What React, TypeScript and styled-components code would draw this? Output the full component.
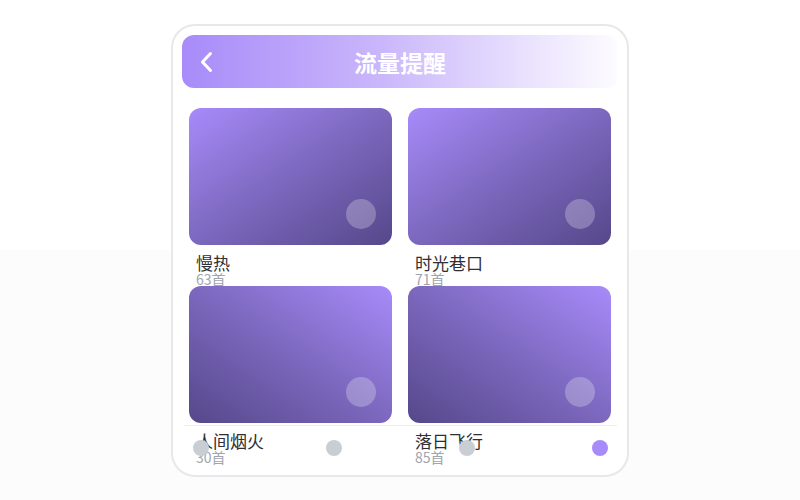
import * as React from 'react'
import styled, { createGlobalStyle } from 'styled-components'

const GlobalStyle = createGlobalStyle`
  html, body {
    margin: 0;
    padding: 0;
  }
  body {
    min-height: 500px;
    background: linear-gradient(#ffffff 0, #ffffff 250px, #fcfcfd 250px);
    font-family: "Noto Sans CJK SC", "Noto Sans", sans-serif;
  }
`

interface Playlist {
  name: string
  count: number
}

const playlists: Playlist[] = [
  { name: '慢热', count: 63 },
  { name: '时光巷口', count: 71 },
  { name: '人间烟火', count: 30 },
  { name: '落日飞行', count: 85 },
]

const tabs = ['home', 'discover', 'library', 'mine']
const ACTIVE_TAB = 3

export default function App(): JSX.Element {
  return (
    <>
      <GlobalStyle />
      <Page>
        <Phone>
          <Header>
            <BackButton aria-label="back">
              <svg width="16" height="24" viewBox="0 0 16 24">
                <path
                  d="M12.5 3.5 L4.5 12 L12.5 20.5"
                  fill="none"
                  stroke="#fff"
                  strokeWidth="3"
                  strokeLinecap="round"
                  strokeLinejoin="round"
                />
              </svg>
            </BackButton>
            <Title>流量提醒</Title>
            <span />
          </Header>
          <Grid>
            {playlists.map((item, i) => (
              <Cell key={item.name}>
                <Cover $flip={i >= 2}>
                  <PlayDot />
                </Cover>
                <Info>
                  <Name>{item.name}</Name>
                  <Count>{item.count}首</Count>
                </Info>
              </Cell>
            ))}
          </Grid>
          <TabBar>
            {tabs.map((t, i) => (
              <TabDot key={t} $active={i === ACTIVE_TAB} />
            ))}
          </TabBar>
        </Phone>
      </Page>
    </>
  )
}

const Page = styled.div`
  display: flex;
  justify-content: center;
  padding-top: 24px;
`

const Phone = styled.div`
  position: relative;
  box-sizing: border-box;
  width: 458px;
  height: 453px;
  padding: 9px;
  border: 2px solid #e7e7ec;
  border-radius: 24px;
  background: #ffffff;
  overflow: hidden;
`

const Header = styled.div`
  display: grid;
  grid-template-columns: 40px 1fr 40px;
  align-items: center;
  height: 53px;
  padding: 0 16px;
  border-radius: 12px;
  background: linear-gradient(90deg, #a88bf9 0%, #c9b6fb 45%, #fdfcff 100%);
`

const BackButton = styled.div`
  display: flex;
  align-items: center;
  height: 24px;
`

const Title = styled.h1`
  margin: 0;
  text-align: center;
  font-size: 23px;
  font-weight: 700;
  color: #ffffff;
`

const Grid = styled.div`
  display: grid;
  grid-template-columns: 203px 203px;
  grid-auto-rows: 178px;
  column-gap: 16px;
  padding: 20px 7px 0;
`

const Cell = styled.div`
  display: flex;
  flex-direction: column;
`

const Cover = styled.div<{ $flip: boolean }>`
  position: relative;
  flex: 0 0 137px;
  border-radius: 12px;
  background: ${(p) =>
    p.$flip
      ? 'linear-gradient(to bottom left, #a78bfa 0%, #7c68be 50%, #56478a 100%)'
      : 'linear-gradient(to bottom right, #a78bfa 0%, #7c68be 50%, #56478a 100%)'};
`

const PlayDot = styled.span`
  position: absolute;
  right: 16px;
  bottom: 16px;
  width: 30px;
  height: 30px;
  border-radius: 50%;
  background: rgba(255, 255, 255, 0.25);
`

const Info = styled.div`
  padding: 9px 7px 0;
`

const Name = styled.div`
  font-size: 17px;
  line-height: 18px;
  color: #2f2f33;
`

const Count = styled.div`
  font-size: 14px;
  line-height: 14px;
  color: #a0a4ad;
`

const TabBar = styled.div`
  position: absolute;
  left: 11px;
  right: 10px;
  bottom: 6px;
  height: 44px;
  box-sizing: border-box;
  display: flex;
  justify-content: space-between;
  align-items: center;
  padding: 0 9px;
  border-top: 1px solid #eceef2;
`

const TabDot = styled.span<{ $active: boolean }>`
  width: 16px;
  height: 16px;
  border-radius: 50%;
  background: ${(p) => (p.$active ? '#a78bfa' : '#c9cdd4')};
`
